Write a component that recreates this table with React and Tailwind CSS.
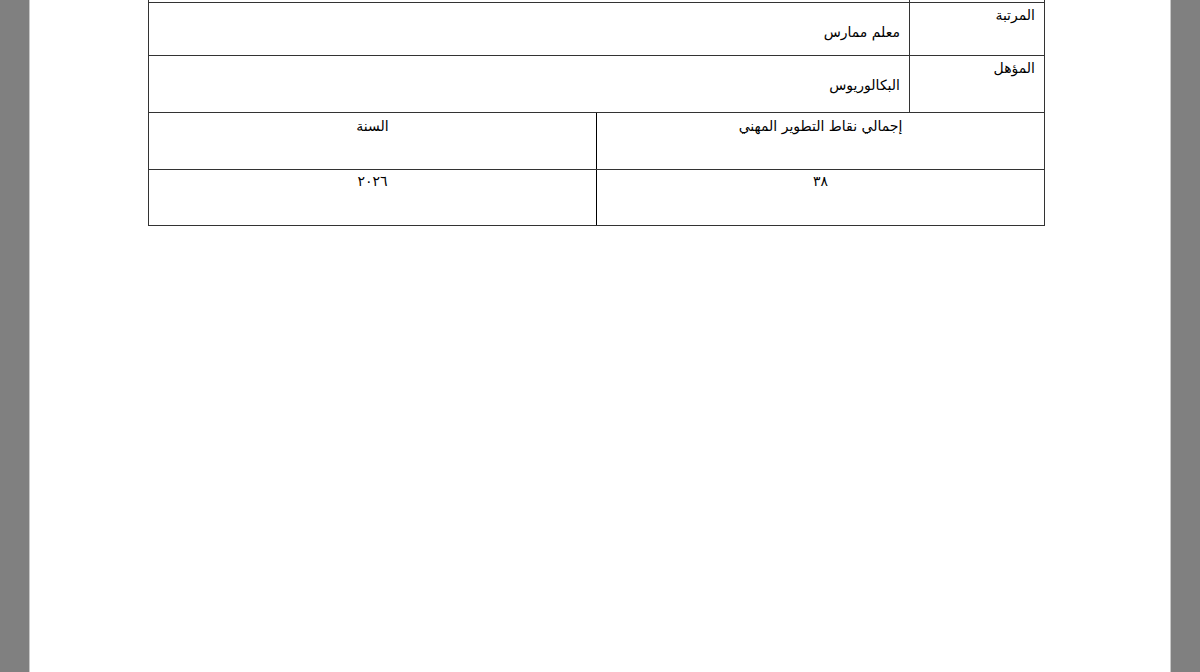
import React from "react";

const font = { fontFamily: '"DejaVu Sans", "Noto Sans", serif' };

function InfoRow({ label, value, height }) {
  return (
    <div className={`flex border-x border-b border-[#333] ${height}`}>
      <div className="flex-1 border-r border-[#333] pr-[9px] pt-[18px] text-right">
        {value}
      </div>
      <div className="w-[134px] pr-[9px] pt-[1px] text-right">{label}</div>
    </div>
  );
}

function CenterRow({ left, right, height, top }) {
  return (
    <div className={`flex border-x border-b border-[#333] ${height}`}>
      <div className={`w-[448px] border-r border-black text-center ${top}`}>{left}</div>
      <div className={`flex-1 text-center ${top}`}>{right}</div>
    </div>
  );
}

export default function App() {
  return (
    <div className="flex h-[672px] w-[1200px] overflow-hidden bg-[#808080]">
      <div className="ml-[29px] w-[1142px] border-x border-[#c8c8c8] bg-white">
        <div
          dir="ltr"
          className="ml-[118px] w-[897px] text-[14px] leading-[22px] text-black"
          style={font}
        >
          <div className="flex h-[3px] border-x border-b border-[#333]">
            <div className="flex-1 border-r border-[#333]"></div>
            <div className="w-[134px]"></div>
          </div>
          <InfoRow label="المرتبة" value="معلم ممارس" height="h-[53px]" />
          <InfoRow label="المؤهل" value="البكالوريوس" height="h-[57px]" />
          <CenterRow left="السنة" right="إجمالي نقاط التطوير المهني" height="h-[57px]" top="pt-[2px]" />
          <CenterRow left="٢٠٢٦" right="٣٨" height="h-[56px]" top="pt-[0px]" />
        </div>
      </div>
    </div>
  );
}
